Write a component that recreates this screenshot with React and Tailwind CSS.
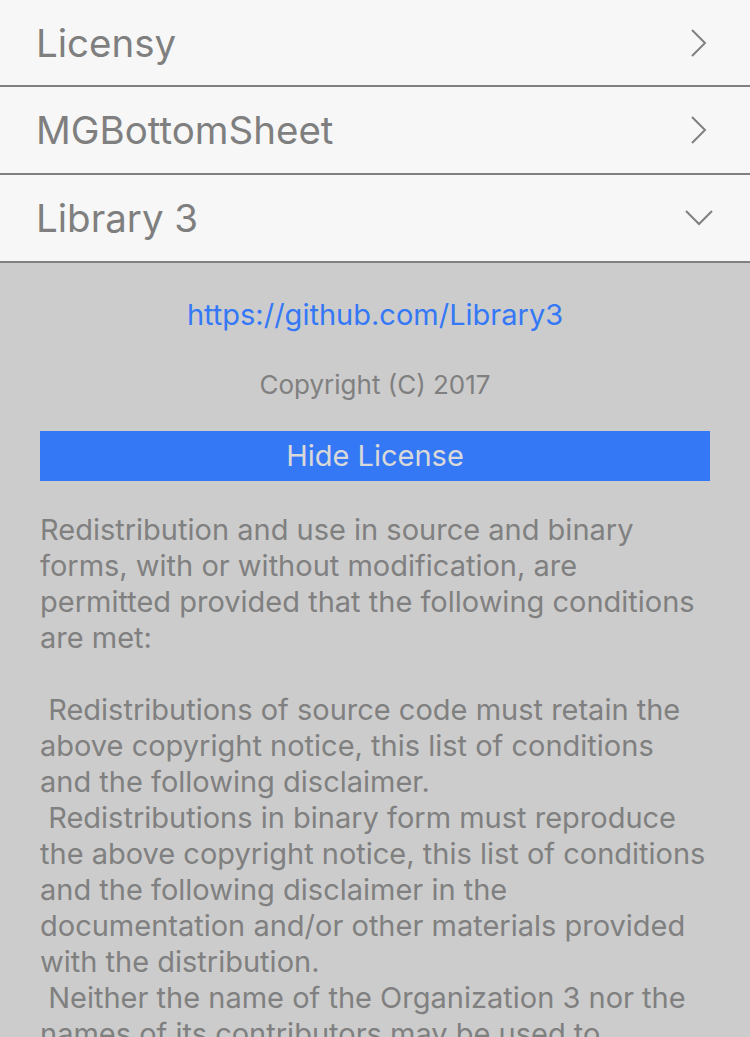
const rows = [
  { name: "Licensy", open: false, h: "h-[87px]" },
  { name: "MGBottomSheet", open: false, h: "h-[88px]" },
  { name: "Library 3", open: true, h: "h-[88px]" },
];

const license = [
  "Redistribution and use in source and binary",
  "forms, with or without modification, are",
  "permitted provided that the following conditions",
  "are met:",
  "",
  " Redistributions of source code must retain the",
  "above copyright notice, this list of conditions",
  "and the following disclaimer.",
  " Redistributions in binary form must reproduce",
  "the above copyright notice, this list of conditions",
  "and the following disclaimer in the",
  "documentation and/or other materials provided",
  "with the distribution.",
  " Neither the name of the Organization 3 nor the",
  "names of its contributors may be used to",
  "endorse or promote products derived from this",
];

function Chevron({ open }) {
  if (open) {
    return (
      <svg width="28" height="16" viewBox="0 0 28 16" fill="none" stroke="#808080" strokeWidth="2" className="mr-[37px]">
        <path d="M1 1l13 13L27 1" />
      </svg>
    );
  }
  return (
    <svg width="16" height="28" viewBox="0 0 16 28" fill="none" stroke="#808080" strokeWidth="2" className="mr-[43px]">
      <path d="M1 1l13 13L1 27" />
    </svg>
  );
}

export default function App() {
  return (
    <div className="w-[750px] h-[1037px] overflow-hidden bg-[#cccccc] font-['Inter','Liberation_Sans',sans-serif]">
      {rows.map((r) => (
        <div key={r.name} className={`${r.h} flex items-center justify-between bg-[#f7f7f7] border-b-2 border-[#808080]`}>
          <span className="pl-[36px] pt-[2px] text-[38.5px] text-[#7f7f7f]">{r.name}</span>
          <Chevron open={r.open} />
        </div>
      ))}

      <div className="pt-[34px] px-[40px]">
        <div className="text-center text-[29px] leading-[36px] text-[#3478f6]">https://github.com/Library3</div>
        <div className="mt-[37px] text-center text-[26px] leading-[30px] text-[#808080]">Copyright (C) 2017</div>
        <div className="mt-[31px] h-[50px] flex items-center justify-center bg-[#3478f6] text-[29px] text-[#d9d9d9]">
          Hide License
        </div>
        <div className="mt-[31px] text-[29px] leading-[36px] text-[#808080]">
          {license.map((l, i) => (
            <div key={i} className="whitespace-pre h-[36px]">{l}</div>
          ))}
        </div>
      </div>
    </div>
  );
}
